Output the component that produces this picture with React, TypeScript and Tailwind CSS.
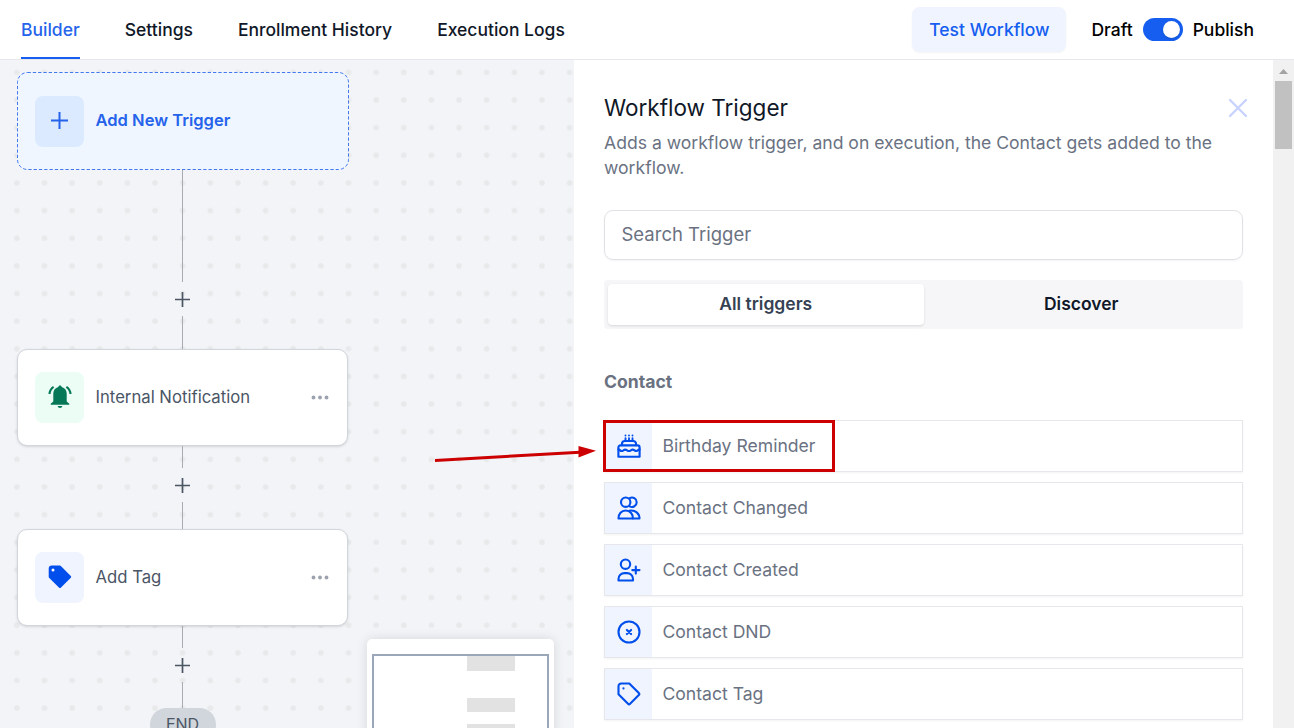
import { useState } from "react";
import type { ReactNode } from "react";

const stroke = {
  fill: "none",
  stroke: "currentColor",
  strokeWidth: 2.1,
  strokeLinecap: "round" as const,
  strokeLinejoin: "round" as const,
};

const CakeIcon = () => (
  <svg width="24" height="24" viewBox="0 0 24 24" {...stroke}>
    <path d="M8.5 1.4v.1M12 1.4v.1M15.5 1.4v.1M8.5 4.200v2.600M12 4.200v2.600M15.500 4.200v2.600" strokeWidth={1.9} />
    <path d="M5 11.2V9.8A2.8 2.8 0 0 1 7.8 7h8.4A2.8 2.8 0 0 1 19 9.8v1.4" />
    <path d="M1.4 22.7V13.4a2 2 0 0 1 2-2h17.2a2 2 0 0 1 2 2v9.3z" />
    <path d="M1.4 15.4c1.3 0 1.5 1.6 3.2 1.6 1.6 0 2-1.4 3.6-1.4S10.4 17 12 17s2-1.4 3.7-1.4 2 1.4 3.6 1.4 2-1.6 3.3-1.6" />
  </svg>
);

const UsersIcon = () => (
  <svg width="24" height="24" viewBox="0 0 24 24" {...stroke}>
    <circle cx="8.7" cy="6.200" r="4.700" />
    <path d="M12.700 2.100a4.700 4.700 0 1 1 0 8.200" />
    <path d="M1.500 22.500c0-4.600 2.800-8 7.200-8s7.200 3.400 7.200 8z" />
    <path d="M12.400 14.700c6-1.100 10.100 2.900 10.100 7.800h-6.500" />
  </svg>
);

const UserPlusIcon = () => (
  <svg width="24" height="24" viewBox="0 0 24 24" {...stroke}>
    <circle cx="8.500" cy="6.200" r="4.700" />
    <path d="M1.500 22.500v-1.400a6 6 0 0 1 6-6H10a6 6 0 0 1 6 6v1.400z" />
    <path d="M18.800 8.600v7M15.300 12.100h7.200" />
  </svg>
);

const DndIcon = () => (
  <svg width="24" height="24" viewBox="0 0 24 24" {...stroke}>
    <circle cx="12" cy="12" r="10.500" />
    <path d="m9.900 9.900 4.200 4.200M14.100 9.900l-4.200 4.200" />
  </svg>
);

const TagIcon = () => (
  <svg width="24" height="24" viewBox="0 0 24 24" {...stroke}>
    <path d="M1.500 4.200a2.700 2.700 0 0 1 2.700-2.700h8.100L21.800 11a1.500 1.500 0 0 1 0 2.100l-8.700 8.700a1.500 1.500 0 0 1-2.100 0L1.500 12.300z" />
    <path d="M6.400 6.400h.1" />
  </svg>
);

const BellIcon = () => (
  <svg width="24" height="24" viewBox="0 0 24 24" fill="currentColor">
    <path d="M12 .5c1 0 1.600.7 1.700 1.500 3 .8 5 3.300 5 6.500v8l2.600 2.300v1H2.700v-1l2.600-2.300v-8c0-3.200 2-5.700 5-6.500.1-.8.700-1.500 1.700-1.500z" />
    <path d="M9.600 21h4.800c-.3 1.300-1.200 2-2.400 2s-2.100-.7-2.400-2z" />
    <path d="M5.600 1.800C3.300 3.300 1.700 5.800 1.500 9M18.400 1.800c2.300 1.500 3.900 4 4.100 7.200" fill="none" stroke="currentColor" strokeWidth="2.100" />
  </svg>
);

const SolidTagIcon = () => (
  <svg width="24" height="24" viewBox="0 0 24 24">
    <path d="M.7 3.800A3.200 3.200 0 0 1 3.900.6h7.800c.5 0 1 .2 1.400.6l9.700 9.700a1.300 1.300 0 0 1 0 1.900L13 22.500a1.500 1.500 0 0 1-2.100 0L1.300 13.100a2 2 0 0 1-.6-1.400z" fill="currentColor" />
    <circle cx="5" cy="5" r="1.500" fill="#fff" />
  </svg>
);

const tabs = ["Builder", "Settings", "Enrollment History", "Execution Logs"];

const triggers = [
  { name: "Birthday Reminder", icon: <CakeIcon />, marked: true },
  { name: "Contact Changed", icon: <UsersIcon /> },
  { name: "Contact Created", icon: <UserPlusIcon /> },
  { name: "Contact DND", icon: <DndIcon /> },
  { name: "Contact Tag", icon: <TagIcon /> },
];

function Header() {
  const [active, setActive] = useState("Builder");
  const [published, setPublished] = useState(true);

  return (
    <header className="flex h-[60px] shrink-0 items-center border-b border-gray-200 bg-white pl-[21px] pr-10 text-[17.5px] font-medium">
      <nav className="flex h-full gap-[45px]">
        {tabs.map((tab) => (
          <button
            key={tab}
            onClick={() => setActive(tab)}
            className={`h-full border-b-2 pt-[3px] whitespace-nowrap ${
              active === tab
                ? "border-[#155eef] text-[#2563eb]"
                : "border-transparent text-gray-900"
            }`}
          >
            {tab}
          </button>
        ))}
      </nav>
      <button className="ml-auto h-[45px] w-[154px] rounded-lg bg-[#eff4ff] pt-px text-[#155eef] shadow-xs">
        Test Workflow
      </button>
      <div className="ml-[25px] flex items-center gap-2.5 text-black">
        <span className="pt-0.5">Draft</span>
        <button
          onClick={() => setPublished(!published)}
          className={`flex h-[23px] w-10 items-center rounded-full px-[3px] ${
            published ? "justify-end bg-[#155eef]" : "bg-gray-300"
          }`}
        >
          <span className="h-[17px] w-[17px] rounded-full bg-white shadow" />
        </button>
        <span className="pt-0.5">Publish</span>
      </div>
    </header>
  );
}

function Connector({ top, bottom }: { top: string; bottom: string }) {
  return (
    <div className="flex flex-col items-center">
      <div className={`w-px bg-[#a9abb3] ${top}`} />
      <div className="flex h-[34px] w-[33px] items-center justify-center">
        <svg width="15" height="16" viewBox="0 0 15 16" stroke="#4b5563" strokeWidth="1.700">
          <path d="M7.500 1v15M0 8.500h15" />
        </svg>
      </div>
      <div className={`w-px bg-[#a9abb3] ${bottom}`} />
    </div>
  );
}

function StepCard({ label, icon, tone }: { label: string; icon: ReactNode; tone: string }) {
  return (
    <div className="flex h-[97px] w-[331px] items-center rounded-[10px] border border-gray-300 bg-white pl-[17px] pr-[18px] shadow-sm">
      <div className={`flex h-[51px] w-[49px] items-center justify-center rounded-lg pb-px ${tone}`}>{icon}</div>
      <span className="ml-[11.500px] text-[16.700px] text-gray-600">{label}</span>
      <svg className="ml-auto" width="18" height="7" viewBox="0 0 18 7" fill="#9ca3af">
        <circle cx="2.500" cy="3.500" r="1.900" />
        <circle cx="9" cy="3.500" r="1.900" />
        <circle cx="15.500" cy="3.500" r="1.900" />
      </svg>
    </div>
  );
}

function Canvas() {
  return (
    <main className="relative w-[574px] shrink-0 overflow-hidden bg-[#f2f4f7]">
      <svg className="absolute inset-0 h-full w-full">
        <pattern id="dots" x="3" y="-1.500" width="27.640" height="27.640" patternUnits="userSpaceOnUse">
          <circle cx="13.820" cy="13.820" r="2.800" fill="#e8e9ea" />
        </pattern>
        <rect width="100%" height="100%" fill="url(#dots)" />
      </svg>

      <div className="relative ml-[17px] flex w-[331px] flex-col items-center pt-3">
        <div className="relative flex h-[98px] w-full items-center rounded-[10px] bg-[#eff6ff] pl-[18px]">
          <svg className="absolute inset-0" width="332" height="98" fill="none">
            <rect x=".5" y=".5" width="331" height="97" rx="10" stroke="#2563eb" strokeOpacity=".85" strokeDasharray="3.300 2" />
          </svg>
          <div className="flex h-[51px] w-[49px] items-center justify-center rounded-lg bg-[#dbeafe] pb-px">
            <svg width="17" height="17" viewBox="0 0 17 17" stroke="#2563eb" strokeWidth="2">
              <path d="M8.500 0v17M0 8.500h17" />
            </svg>
          </div>
          <span className="ml-[11.500px] pb-0.5 text-[16.550px] font-semibold text-[#2563eb]">Add New Trigger</span>
        </div>
        <Connector top="h-[112px]" bottom="h-[33px]" />
        <StepCard label="Internal Notification" icon={<BellIcon />} tone="bg-[#ecfdf5] text-[#047857]" />
        <Connector top="h-[22px]" bottom="h-[27px]" />
        <StepCard label="Add Tag" icon={<SolidTagIcon />} tone="bg-[#eff4ff] text-[#004eeb]" />
        <Connector top="h-[22px]" bottom="h-[26px]" />
        <div className="h-[33px] w-[66px] shrink-0 rounded-full bg-gray-300 pt-1 text-center text-[16px] text-gray-600">
          END
        </div>
      </div>

      {/* Minimap */}
      <div className="absolute left-[367px] top-[579px] h-40 w-[187px] rounded-[5px] bg-white px-[5px] pt-[15px] shadow-[0_0_12px_rgba(0,0,0,0.12)]">
        <div className="flex h-36 flex-col items-start border-2 border-[#9ba6b8] pl-[93px]">
          <div className="h-[15px] w-12 bg-[#e2e2e2]" />
          <div className="mt-[27px] h-3.5 w-12 bg-[#e2e2e2]" />
          <div className="mt-3 h-3.5 w-12 bg-[#e2e2e2]" />
        </div>
      </div>
    </main>
  );
}

function TriggerPanel() {
  const [tab, setTab] = useState("All triggers");

  return (
    <section className="flex-1 overflow-hidden bg-white pl-[30px] pr-[30px] pt-8">
      <div className="flex items-center justify-between">
        <h2 className="text-[22.500px] leading-8 text-gray-900">Workflow Trigger</h2>
        <svg className="-mr-1.5" width="22" height="22" viewBox="0 0 22 22" stroke="#c7d2fe" strokeWidth="2.300" strokeLinecap="round">
          <path d="m3 3 16 16M19 3 3 19" />
        </svg>
      </div>
      <p className="mt-1.5 text-[17.580px] leading-[25px] text-gray-500">
        Adds a workflow trigger, and on execution, the Contact gets added to the workflow.
      </p>
      <input
        placeholder="Search Trigger"
        className="mt-[30px] block h-[50px] w-full rounded-[9px] border border-[#dfe1e5] px-[16.500px] pb-0.5 text-[18.500px] shadow-xs outline-none placeholder:text-gray-500"
      />
      <div className="mt-5 flex h-[49px] rounded bg-[#f6f6f8] p-1">
        {["All triggers", "Discover"].map((name) => (
          <button
            key={name}
            onClick={() => setTab(name)}
            className={`flex-1 rounded text-[17.500px] font-semibold ${
              tab === name ? "bg-white text-gray-700 shadow-sm" : "text-gray-900"
            }`}
          >
            {name}
          </button>
        ))}
      </div>
      <h3 className="mt-10 text-[17.600px] font-bold leading-[26px] text-gray-500">Contact</h3>
      <ul className="mt-[25px] flex flex-col gap-2.5">
        {triggers.map((item) => (
          <li key={item.name} className="relative flex h-[52px] items-center border border-gray-200 shadow-xs">
            <div className="flex h-full w-[47px] items-center justify-center bg-[#eff4ff] text-[#004eeb]">
              {item.icon}
            </div>
            <span className="ml-[10.400px] text-[17.600px] text-gray-500">{item.name}</span>
            {item.marked && (
              <div className="absolute -left-0.5 -top-px h-[52px] w-[232px] border-3 border-[#cc0000]" />
            )}
          </li>
        ))}
      </ul>
    </section>
  );
}

function Scrollbar() {
  return (
    <div className="flex w-[21px] shrink-0 flex-col items-center bg-[#f1f1f1] pt-[9px]">
      <svg width="9" height="5" viewBox="0 0 9 5" fill="#a3a3a3">
        <path d="M4.500 0 9 5H0z" />
      </svg>
      <div className="mt-[7px] h-[68px] w-[17px] bg-[#c1c1c1]" />
    </div>
  );
}

export default function App() {
  return (
    <div className="relative flex h-[728px] w-[1294px] flex-col overflow-hidden bg-white font-['Inter',sans-serif]">
      <Header />
      <div className="flex min-h-0 flex-1">
        <Canvas />
        <TriggerPanel />
        <Scrollbar />
      </div>
      {/* Pointer to the birthday trigger */}
      <svg className="pointer-events-none absolute left-[430px] top-[440px]" width="170" height="26" fill="#cc0000">
        <path d="M5 20.500 150 12.300" stroke="#cc0000" strokeWidth="3" />
        <path d="M148.500 6v11.500L166 10.800z" />
      </svg>
    </div>
  );
}
